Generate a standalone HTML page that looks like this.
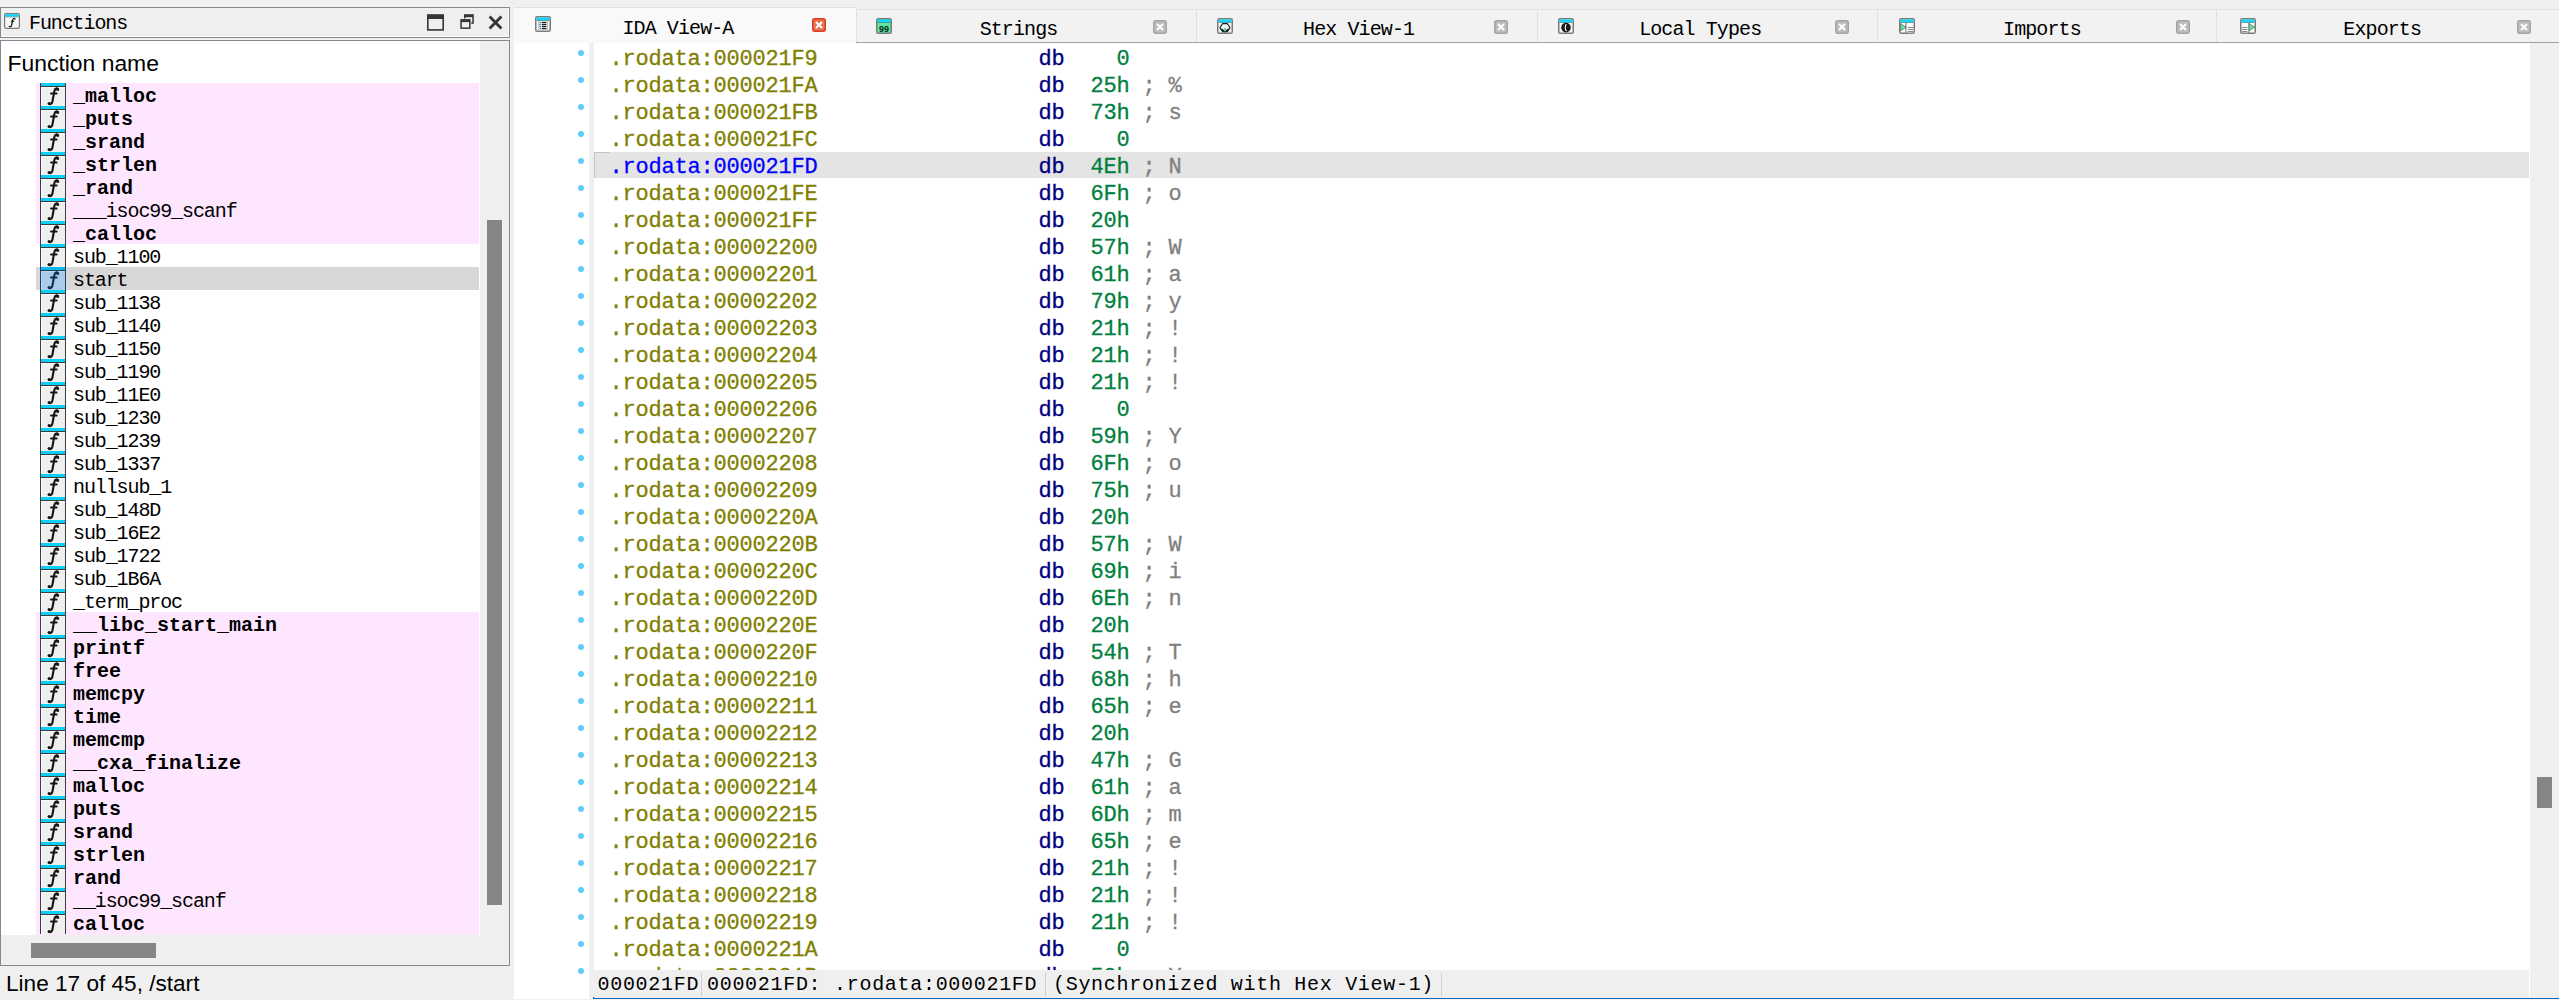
<!DOCTYPE html><html><head><meta charset="utf-8"><style>
*{margin:0;padding:0;box-sizing:border-box}
html,body{width:2559px;height:1000px;overflow:hidden;background:#f0f0f0;position:relative;font-family:"Liberation Mono",monospace}
.abs{position:absolute}
.mono{font-family:"Liberation Mono",monospace;white-space:pre}
.sans{font-family:"Liberation Sans",sans-serif;white-space:pre}
#ftitle{left:0;top:7;width:510px;height:31px;border:1px solid #848892;background:#efefef}
#flist{left:0;top:40px;width:510px;height:926px;border:1px solid #848892;background:#fff}
.frow{position:absolute;left:36px;width:443px;height:23px}
.frow .ic{position:absolute;left:4px;top:0;width:26px;height:23px}
.frow .tx{position:absolute;left:37px;top:2px;height:23px;line-height:23px;font-size:20px;letter-spacing:-1.1px;color:#000;white-space:pre}
.frow .tx.b{font-weight:bold;letter-spacing:0}
.tab{position:absolute;height:34px}
.tabtx{position:absolute;font-size:20px;letter-spacing:-1.1px;color:#000;white-space:pre;line-height:20px}
.code{position:absolute;left:608.6px;font-size:22px;letter-spacing:-0.2px;white-space:pre;line-height:27px;height:27px;-webkit-text-stroke:0.3px currentColor}
.olive{color:#808000}.navy{color:#000080}.grn{color:#008040}.gray{color:#808080}.blue{color:#0000ff}
.dot{position:absolute;left:578px;width:6px;height:6px;border-radius:3px;background:#5fcdfc}
</style></head><body>
<div class="abs" style="left:0;top:7px;width:510px;height:31px;border:1px solid #848892;background:#efefef"></div><div class="abs" style="left:1px;top:36px;width:508px;height:1px;background:#fff"></div><div class="abs" style="left:508px;top:8px;width:1px;height:29px;background:#fff"></div>
<svg class="abs" style="left:4px;top:13px" width="16" height="16" viewBox="0 0 16 16"><rect x="0.6" y="0.6" width="14.8" height="14.8" rx="1.6" fill="#f8f8f8" stroke="#7a7a7a" stroke-width="1.2"/><rect x="1.2" y="1.2" width="13.6" height="2.4" fill="#0ad8fc"/><rect x="1.2" y="3.6" width="13.6" height="0.7" fill="#4a8a9a"/><path d="M11 6.2 C10.6 5 9 5.2 8.6 7.2 L7.6 12.4 C7.3 13.6 6.3 13.9 5.3 13.5" fill="none" stroke="#1a1a1a" stroke-width="1.3" stroke-linecap="round"/><path d="M6.9 8.3 L10.2 8.3" stroke="#1a1a1a" stroke-width="1.1"/></svg>
<div class="abs mono" style="left:29px;top:14px;font-size:20px;letter-spacing:-1.1px;line-height:20px;color:#000">Functions</div>
<svg class="abs" style="left:420px;top:8px" width="90" height="30" viewBox="0 0 90 30"><rect x="7" y="6.2" width="17" height="16.5" fill="#333538"/><rect x="8.6" y="11" width="13.8" height="10.1" fill="#efefef"/><rect x="44" y="6.2" width="9.8" height="9.6" fill="#333538"/><rect x="45.5" y="9.2" width="6.8" height="5.1" fill="#efefef"/><rect x="39.6" y="10.4" width="11.7" height="11.2" fill="#efefef"/><rect x="40.3" y="11.1" width="10.3" height="9.8" fill="#333538"/><rect x="41.8" y="14.1" width="7.3" height="5.3" fill="#efefef"/><path d="M69.6 8.6 L81.4 20.4 M81.4 8.6 L69.6 20.4" stroke="#333538" stroke-width="2.8"/></svg>
<div class="abs" style="left:0;top:40px;width:510px;height:926px;border:1px solid #848892;background:#fff"></div>
<div class="abs sans" style="left:7.5px;top:50px;font-size:22.9px;line-height:26px;color:#000">Function name</div>
<div class="frow" style="top:83px;height:23px;background:#fee6fe;overflow:hidden">
<div class="ic"><svg width="26" height="23" viewBox="0 0 26 23"><rect x="0" y="0" width="26" height="23" fill="#3c3c3c"/><rect x="1" y="0" width="24" height="3" fill="#0ad0f8"/><rect x="1" y="4" width="24" height="19" fill="#fafafa"/><rect x="2" y="5" width="23" height="18" fill="#efefef"/><path d="M18.2 6.6 C17.8 4.6 15 4.8 14.3 8.2 L12.4 18.8 C12 21 10.4 21.6 8.6 20.6" fill="none" stroke="#161616" stroke-width="2.1" stroke-linecap="round"/><circle cx="17.4" cy="6.3" r="1.5" fill="#161616"/><circle cx="9.4" cy="20.4" r="1.5" fill="#161616"/><path d="M11 10.6 L16.6 10.6" stroke="#161616" stroke-width="2" stroke-linecap="round"/></svg></div>
<div class="tx b">_malloc</div></div>
<div class="frow" style="top:106px;height:23px;background:#fee6fe;overflow:hidden">
<div class="ic"><svg width="26" height="23" viewBox="0 0 26 23"><rect x="0" y="0" width="26" height="23" fill="#3c3c3c"/><rect x="1" y="0" width="24" height="3" fill="#0ad0f8"/><rect x="1" y="4" width="24" height="19" fill="#fafafa"/><rect x="2" y="5" width="23" height="18" fill="#efefef"/><path d="M18.2 6.6 C17.8 4.6 15 4.8 14.3 8.2 L12.4 18.8 C12 21 10.4 21.6 8.6 20.6" fill="none" stroke="#161616" stroke-width="2.1" stroke-linecap="round"/><circle cx="17.4" cy="6.3" r="1.5" fill="#161616"/><circle cx="9.4" cy="20.4" r="1.5" fill="#161616"/><path d="M11 10.6 L16.6 10.6" stroke="#161616" stroke-width="2" stroke-linecap="round"/></svg></div>
<div class="tx b">_puts</div></div>
<div class="frow" style="top:129px;height:23px;background:#fee6fe;overflow:hidden">
<div class="ic"><svg width="26" height="23" viewBox="0 0 26 23"><rect x="0" y="0" width="26" height="23" fill="#3c3c3c"/><rect x="1" y="0" width="24" height="3" fill="#0ad0f8"/><rect x="1" y="4" width="24" height="19" fill="#fafafa"/><rect x="2" y="5" width="23" height="18" fill="#efefef"/><path d="M18.2 6.6 C17.8 4.6 15 4.8 14.3 8.2 L12.4 18.8 C12 21 10.4 21.6 8.6 20.6" fill="none" stroke="#161616" stroke-width="2.1" stroke-linecap="round"/><circle cx="17.4" cy="6.3" r="1.5" fill="#161616"/><circle cx="9.4" cy="20.4" r="1.5" fill="#161616"/><path d="M11 10.6 L16.6 10.6" stroke="#161616" stroke-width="2" stroke-linecap="round"/></svg></div>
<div class="tx b">_srand</div></div>
<div class="frow" style="top:152px;height:23px;background:#fee6fe;overflow:hidden">
<div class="ic"><svg width="26" height="23" viewBox="0 0 26 23"><rect x="0" y="0" width="26" height="23" fill="#3c3c3c"/><rect x="1" y="0" width="24" height="3" fill="#0ad0f8"/><rect x="1" y="4" width="24" height="19" fill="#fafafa"/><rect x="2" y="5" width="23" height="18" fill="#efefef"/><path d="M18.2 6.6 C17.8 4.6 15 4.8 14.3 8.2 L12.4 18.8 C12 21 10.4 21.6 8.6 20.6" fill="none" stroke="#161616" stroke-width="2.1" stroke-linecap="round"/><circle cx="17.4" cy="6.3" r="1.5" fill="#161616"/><circle cx="9.4" cy="20.4" r="1.5" fill="#161616"/><path d="M11 10.6 L16.6 10.6" stroke="#161616" stroke-width="2" stroke-linecap="round"/></svg></div>
<div class="tx b">_strlen</div></div>
<div class="frow" style="top:175px;height:23px;background:#fee6fe;overflow:hidden">
<div class="ic"><svg width="26" height="23" viewBox="0 0 26 23"><rect x="0" y="0" width="26" height="23" fill="#3c3c3c"/><rect x="1" y="0" width="24" height="3" fill="#0ad0f8"/><rect x="1" y="4" width="24" height="19" fill="#fafafa"/><rect x="2" y="5" width="23" height="18" fill="#efefef"/><path d="M18.2 6.6 C17.8 4.6 15 4.8 14.3 8.2 L12.4 18.8 C12 21 10.4 21.6 8.6 20.6" fill="none" stroke="#161616" stroke-width="2.1" stroke-linecap="round"/><circle cx="17.4" cy="6.3" r="1.5" fill="#161616"/><circle cx="9.4" cy="20.4" r="1.5" fill="#161616"/><path d="M11 10.6 L16.6 10.6" stroke="#161616" stroke-width="2" stroke-linecap="round"/></svg></div>
<div class="tx b">_rand</div></div>
<div class="frow" style="top:198px;height:23px;background:#fee6fe;overflow:hidden">
<div class="ic"><svg width="26" height="23" viewBox="0 0 26 23"><rect x="0" y="0" width="26" height="23" fill="#3c3c3c"/><rect x="1" y="0" width="24" height="3" fill="#0ad0f8"/><rect x="1" y="4" width="24" height="19" fill="#fafafa"/><rect x="2" y="5" width="23" height="18" fill="#efefef"/><path d="M18.2 6.6 C17.8 4.6 15 4.8 14.3 8.2 L12.4 18.8 C12 21 10.4 21.6 8.6 20.6" fill="none" stroke="#161616" stroke-width="2.1" stroke-linecap="round"/><circle cx="17.4" cy="6.3" r="1.5" fill="#161616"/><circle cx="9.4" cy="20.4" r="1.5" fill="#161616"/><path d="M11 10.6 L16.6 10.6" stroke="#161616" stroke-width="2" stroke-linecap="round"/></svg></div>
<div class="tx">___isoc99_scanf</div></div>
<div class="frow" style="top:221px;height:23px;background:#fee6fe;overflow:hidden">
<div class="ic"><svg width="26" height="23" viewBox="0 0 26 23"><rect x="0" y="0" width="26" height="23" fill="#3c3c3c"/><rect x="1" y="0" width="24" height="3" fill="#0ad0f8"/><rect x="1" y="4" width="24" height="19" fill="#fafafa"/><rect x="2" y="5" width="23" height="18" fill="#efefef"/><path d="M18.2 6.6 C17.8 4.6 15 4.8 14.3 8.2 L12.4 18.8 C12 21 10.4 21.6 8.6 20.6" fill="none" stroke="#161616" stroke-width="2.1" stroke-linecap="round"/><circle cx="17.4" cy="6.3" r="1.5" fill="#161616"/><circle cx="9.4" cy="20.4" r="1.5" fill="#161616"/><path d="M11 10.6 L16.6 10.6" stroke="#161616" stroke-width="2" stroke-linecap="round"/></svg></div>
<div class="tx b">_calloc</div></div>
<div class="frow" style="top:244px;height:23px;background:transparent;overflow:hidden">
<div class="ic"><svg width="26" height="23" viewBox="0 0 26 23"><rect x="0" y="0" width="26" height="23" fill="#3c3c3c"/><rect x="1" y="0" width="24" height="3" fill="#0ad0f8"/><rect x="1" y="4" width="24" height="19" fill="#fafafa"/><rect x="2" y="5" width="23" height="18" fill="#efefef"/><path d="M18.2 6.6 C17.8 4.6 15 4.8 14.3 8.2 L12.4 18.8 C12 21 10.4 21.6 8.6 20.6" fill="none" stroke="#161616" stroke-width="2.1" stroke-linecap="round"/><circle cx="17.4" cy="6.3" r="1.5" fill="#161616"/><circle cx="9.4" cy="20.4" r="1.5" fill="#161616"/><path d="M11 10.6 L16.6 10.6" stroke="#161616" stroke-width="2" stroke-linecap="round"/></svg></div>
<div class="tx">sub_1100</div></div>
<div class="frow" style="top:267px;height:23px;background:#d8d8d8;overflow:hidden">
<div class="ic"><svg width="26" height="23" viewBox="0 0 26 23"><rect x="0" y="0" width="26" height="23" fill="#23405c"/><rect x="1" y="0" width="24" height="3" fill="#08b8f0"/><rect x="1" y="4" width="24" height="19" fill="#b8d8f0"/><rect x="2" y="5" width="23" height="18" fill="#aacce8"/><path d="M18.2 6.6 C17.8 4.6 15 4.8 14.3 8.2 L12.4 18.8 C12 21 10.4 21.6 8.6 20.6" fill="none" stroke="#0f3050" stroke-width="2.1" stroke-linecap="round"/><circle cx="17.4" cy="6.3" r="1.5" fill="#0f3050"/><circle cx="9.4" cy="20.4" r="1.5" fill="#0f3050"/><path d="M11 10.6 L16.6 10.6" stroke="#0f3050" stroke-width="2" stroke-linecap="round"/></svg></div>
<div class="tx">start</div></div>
<div class="frow" style="top:290px;height:23px;background:transparent;overflow:hidden">
<div class="ic"><svg width="26" height="23" viewBox="0 0 26 23"><rect x="0" y="0" width="26" height="23" fill="#3c3c3c"/><rect x="1" y="0" width="24" height="3" fill="#0ad0f8"/><rect x="1" y="4" width="24" height="19" fill="#fafafa"/><rect x="2" y="5" width="23" height="18" fill="#efefef"/><path d="M18.2 6.6 C17.8 4.6 15 4.8 14.3 8.2 L12.4 18.8 C12 21 10.4 21.6 8.6 20.6" fill="none" stroke="#161616" stroke-width="2.1" stroke-linecap="round"/><circle cx="17.4" cy="6.3" r="1.5" fill="#161616"/><circle cx="9.4" cy="20.4" r="1.5" fill="#161616"/><path d="M11 10.6 L16.6 10.6" stroke="#161616" stroke-width="2" stroke-linecap="round"/></svg></div>
<div class="tx">sub_1138</div></div>
<div class="frow" style="top:313px;height:23px;background:transparent;overflow:hidden">
<div class="ic"><svg width="26" height="23" viewBox="0 0 26 23"><rect x="0" y="0" width="26" height="23" fill="#3c3c3c"/><rect x="1" y="0" width="24" height="3" fill="#0ad0f8"/><rect x="1" y="4" width="24" height="19" fill="#fafafa"/><rect x="2" y="5" width="23" height="18" fill="#efefef"/><path d="M18.2 6.6 C17.8 4.6 15 4.8 14.3 8.2 L12.4 18.8 C12 21 10.4 21.6 8.6 20.6" fill="none" stroke="#161616" stroke-width="2.1" stroke-linecap="round"/><circle cx="17.4" cy="6.3" r="1.5" fill="#161616"/><circle cx="9.4" cy="20.4" r="1.5" fill="#161616"/><path d="M11 10.6 L16.6 10.6" stroke="#161616" stroke-width="2" stroke-linecap="round"/></svg></div>
<div class="tx">sub_1140</div></div>
<div class="frow" style="top:336px;height:23px;background:transparent;overflow:hidden">
<div class="ic"><svg width="26" height="23" viewBox="0 0 26 23"><rect x="0" y="0" width="26" height="23" fill="#3c3c3c"/><rect x="1" y="0" width="24" height="3" fill="#0ad0f8"/><rect x="1" y="4" width="24" height="19" fill="#fafafa"/><rect x="2" y="5" width="23" height="18" fill="#efefef"/><path d="M18.2 6.6 C17.8 4.6 15 4.8 14.3 8.2 L12.4 18.8 C12 21 10.4 21.6 8.6 20.6" fill="none" stroke="#161616" stroke-width="2.1" stroke-linecap="round"/><circle cx="17.4" cy="6.3" r="1.5" fill="#161616"/><circle cx="9.4" cy="20.4" r="1.5" fill="#161616"/><path d="M11 10.6 L16.6 10.6" stroke="#161616" stroke-width="2" stroke-linecap="round"/></svg></div>
<div class="tx">sub_1150</div></div>
<div class="frow" style="top:359px;height:23px;background:transparent;overflow:hidden">
<div class="ic"><svg width="26" height="23" viewBox="0 0 26 23"><rect x="0" y="0" width="26" height="23" fill="#3c3c3c"/><rect x="1" y="0" width="24" height="3" fill="#0ad0f8"/><rect x="1" y="4" width="24" height="19" fill="#fafafa"/><rect x="2" y="5" width="23" height="18" fill="#efefef"/><path d="M18.2 6.6 C17.8 4.6 15 4.8 14.3 8.2 L12.4 18.8 C12 21 10.4 21.6 8.6 20.6" fill="none" stroke="#161616" stroke-width="2.1" stroke-linecap="round"/><circle cx="17.4" cy="6.3" r="1.5" fill="#161616"/><circle cx="9.4" cy="20.4" r="1.5" fill="#161616"/><path d="M11 10.6 L16.6 10.6" stroke="#161616" stroke-width="2" stroke-linecap="round"/></svg></div>
<div class="tx">sub_1190</div></div>
<div class="frow" style="top:382px;height:23px;background:transparent;overflow:hidden">
<div class="ic"><svg width="26" height="23" viewBox="0 0 26 23"><rect x="0" y="0" width="26" height="23" fill="#3c3c3c"/><rect x="1" y="0" width="24" height="3" fill="#0ad0f8"/><rect x="1" y="4" width="24" height="19" fill="#fafafa"/><rect x="2" y="5" width="23" height="18" fill="#efefef"/><path d="M18.2 6.6 C17.8 4.6 15 4.8 14.3 8.2 L12.4 18.8 C12 21 10.4 21.6 8.6 20.6" fill="none" stroke="#161616" stroke-width="2.1" stroke-linecap="round"/><circle cx="17.4" cy="6.3" r="1.5" fill="#161616"/><circle cx="9.4" cy="20.4" r="1.5" fill="#161616"/><path d="M11 10.6 L16.6 10.6" stroke="#161616" stroke-width="2" stroke-linecap="round"/></svg></div>
<div class="tx">sub_11E0</div></div>
<div class="frow" style="top:405px;height:23px;background:transparent;overflow:hidden">
<div class="ic"><svg width="26" height="23" viewBox="0 0 26 23"><rect x="0" y="0" width="26" height="23" fill="#3c3c3c"/><rect x="1" y="0" width="24" height="3" fill="#0ad0f8"/><rect x="1" y="4" width="24" height="19" fill="#fafafa"/><rect x="2" y="5" width="23" height="18" fill="#efefef"/><path d="M18.2 6.6 C17.8 4.6 15 4.8 14.3 8.2 L12.4 18.8 C12 21 10.4 21.6 8.6 20.6" fill="none" stroke="#161616" stroke-width="2.1" stroke-linecap="round"/><circle cx="17.4" cy="6.3" r="1.5" fill="#161616"/><circle cx="9.4" cy="20.4" r="1.5" fill="#161616"/><path d="M11 10.6 L16.6 10.6" stroke="#161616" stroke-width="2" stroke-linecap="round"/></svg></div>
<div class="tx">sub_1230</div></div>
<div class="frow" style="top:428px;height:23px;background:transparent;overflow:hidden">
<div class="ic"><svg width="26" height="23" viewBox="0 0 26 23"><rect x="0" y="0" width="26" height="23" fill="#3c3c3c"/><rect x="1" y="0" width="24" height="3" fill="#0ad0f8"/><rect x="1" y="4" width="24" height="19" fill="#fafafa"/><rect x="2" y="5" width="23" height="18" fill="#efefef"/><path d="M18.2 6.6 C17.8 4.6 15 4.8 14.3 8.2 L12.4 18.8 C12 21 10.4 21.6 8.6 20.6" fill="none" stroke="#161616" stroke-width="2.1" stroke-linecap="round"/><circle cx="17.4" cy="6.3" r="1.5" fill="#161616"/><circle cx="9.4" cy="20.4" r="1.5" fill="#161616"/><path d="M11 10.6 L16.6 10.6" stroke="#161616" stroke-width="2" stroke-linecap="round"/></svg></div>
<div class="tx">sub_1239</div></div>
<div class="frow" style="top:451px;height:23px;background:transparent;overflow:hidden">
<div class="ic"><svg width="26" height="23" viewBox="0 0 26 23"><rect x="0" y="0" width="26" height="23" fill="#3c3c3c"/><rect x="1" y="0" width="24" height="3" fill="#0ad0f8"/><rect x="1" y="4" width="24" height="19" fill="#fafafa"/><rect x="2" y="5" width="23" height="18" fill="#efefef"/><path d="M18.2 6.6 C17.8 4.6 15 4.8 14.3 8.2 L12.4 18.8 C12 21 10.4 21.6 8.6 20.6" fill="none" stroke="#161616" stroke-width="2.1" stroke-linecap="round"/><circle cx="17.4" cy="6.3" r="1.5" fill="#161616"/><circle cx="9.4" cy="20.4" r="1.5" fill="#161616"/><path d="M11 10.6 L16.6 10.6" stroke="#161616" stroke-width="2" stroke-linecap="round"/></svg></div>
<div class="tx">sub_1337</div></div>
<div class="frow" style="top:474px;height:23px;background:transparent;overflow:hidden">
<div class="ic"><svg width="26" height="23" viewBox="0 0 26 23"><rect x="0" y="0" width="26" height="23" fill="#3c3c3c"/><rect x="1" y="0" width="24" height="3" fill="#0ad0f8"/><rect x="1" y="4" width="24" height="19" fill="#fafafa"/><rect x="2" y="5" width="23" height="18" fill="#efefef"/><path d="M18.2 6.6 C17.8 4.6 15 4.8 14.3 8.2 L12.4 18.8 C12 21 10.4 21.6 8.6 20.6" fill="none" stroke="#161616" stroke-width="2.1" stroke-linecap="round"/><circle cx="17.4" cy="6.3" r="1.5" fill="#161616"/><circle cx="9.4" cy="20.4" r="1.5" fill="#161616"/><path d="M11 10.6 L16.6 10.6" stroke="#161616" stroke-width="2" stroke-linecap="round"/></svg></div>
<div class="tx">nullsub_1</div></div>
<div class="frow" style="top:497px;height:23px;background:transparent;overflow:hidden">
<div class="ic"><svg width="26" height="23" viewBox="0 0 26 23"><rect x="0" y="0" width="26" height="23" fill="#3c3c3c"/><rect x="1" y="0" width="24" height="3" fill="#0ad0f8"/><rect x="1" y="4" width="24" height="19" fill="#fafafa"/><rect x="2" y="5" width="23" height="18" fill="#efefef"/><path d="M18.2 6.6 C17.8 4.6 15 4.8 14.3 8.2 L12.4 18.8 C12 21 10.4 21.6 8.6 20.6" fill="none" stroke="#161616" stroke-width="2.1" stroke-linecap="round"/><circle cx="17.4" cy="6.3" r="1.5" fill="#161616"/><circle cx="9.4" cy="20.4" r="1.5" fill="#161616"/><path d="M11 10.6 L16.6 10.6" stroke="#161616" stroke-width="2" stroke-linecap="round"/></svg></div>
<div class="tx">sub_148D</div></div>
<div class="frow" style="top:520px;height:23px;background:transparent;overflow:hidden">
<div class="ic"><svg width="26" height="23" viewBox="0 0 26 23"><rect x="0" y="0" width="26" height="23" fill="#3c3c3c"/><rect x="1" y="0" width="24" height="3" fill="#0ad0f8"/><rect x="1" y="4" width="24" height="19" fill="#fafafa"/><rect x="2" y="5" width="23" height="18" fill="#efefef"/><path d="M18.2 6.6 C17.8 4.6 15 4.8 14.3 8.2 L12.4 18.8 C12 21 10.4 21.6 8.6 20.6" fill="none" stroke="#161616" stroke-width="2.1" stroke-linecap="round"/><circle cx="17.4" cy="6.3" r="1.5" fill="#161616"/><circle cx="9.4" cy="20.4" r="1.5" fill="#161616"/><path d="M11 10.6 L16.6 10.6" stroke="#161616" stroke-width="2" stroke-linecap="round"/></svg></div>
<div class="tx">sub_16E2</div></div>
<div class="frow" style="top:543px;height:23px;background:transparent;overflow:hidden">
<div class="ic"><svg width="26" height="23" viewBox="0 0 26 23"><rect x="0" y="0" width="26" height="23" fill="#3c3c3c"/><rect x="1" y="0" width="24" height="3" fill="#0ad0f8"/><rect x="1" y="4" width="24" height="19" fill="#fafafa"/><rect x="2" y="5" width="23" height="18" fill="#efefef"/><path d="M18.2 6.6 C17.8 4.6 15 4.8 14.3 8.2 L12.4 18.8 C12 21 10.4 21.6 8.6 20.6" fill="none" stroke="#161616" stroke-width="2.1" stroke-linecap="round"/><circle cx="17.4" cy="6.3" r="1.5" fill="#161616"/><circle cx="9.4" cy="20.4" r="1.5" fill="#161616"/><path d="M11 10.6 L16.6 10.6" stroke="#161616" stroke-width="2" stroke-linecap="round"/></svg></div>
<div class="tx">sub_1722</div></div>
<div class="frow" style="top:566px;height:23px;background:transparent;overflow:hidden">
<div class="ic"><svg width="26" height="23" viewBox="0 0 26 23"><rect x="0" y="0" width="26" height="23" fill="#3c3c3c"/><rect x="1" y="0" width="24" height="3" fill="#0ad0f8"/><rect x="1" y="4" width="24" height="19" fill="#fafafa"/><rect x="2" y="5" width="23" height="18" fill="#efefef"/><path d="M18.2 6.6 C17.8 4.6 15 4.8 14.3 8.2 L12.4 18.8 C12 21 10.4 21.6 8.6 20.6" fill="none" stroke="#161616" stroke-width="2.1" stroke-linecap="round"/><circle cx="17.4" cy="6.3" r="1.5" fill="#161616"/><circle cx="9.4" cy="20.4" r="1.5" fill="#161616"/><path d="M11 10.6 L16.6 10.6" stroke="#161616" stroke-width="2" stroke-linecap="round"/></svg></div>
<div class="tx">sub_1B6A</div></div>
<div class="frow" style="top:589px;height:23px;background:transparent;overflow:hidden">
<div class="ic"><svg width="26" height="23" viewBox="0 0 26 23"><rect x="0" y="0" width="26" height="23" fill="#3c3c3c"/><rect x="1" y="0" width="24" height="3" fill="#0ad0f8"/><rect x="1" y="4" width="24" height="19" fill="#fafafa"/><rect x="2" y="5" width="23" height="18" fill="#efefef"/><path d="M18.2 6.6 C17.8 4.6 15 4.8 14.3 8.2 L12.4 18.8 C12 21 10.4 21.6 8.6 20.6" fill="none" stroke="#161616" stroke-width="2.1" stroke-linecap="round"/><circle cx="17.4" cy="6.3" r="1.5" fill="#161616"/><circle cx="9.4" cy="20.4" r="1.5" fill="#161616"/><path d="M11 10.6 L16.6 10.6" stroke="#161616" stroke-width="2" stroke-linecap="round"/></svg></div>
<div class="tx">_term_proc</div></div>
<div class="frow" style="top:612px;height:23px;background:#fee6fe;overflow:hidden">
<div class="ic"><svg width="26" height="23" viewBox="0 0 26 23"><rect x="0" y="0" width="26" height="23" fill="#3c3c3c"/><rect x="1" y="0" width="24" height="3" fill="#0ad0f8"/><rect x="1" y="4" width="24" height="19" fill="#fafafa"/><rect x="2" y="5" width="23" height="18" fill="#efefef"/><path d="M18.2 6.6 C17.8 4.6 15 4.8 14.3 8.2 L12.4 18.8 C12 21 10.4 21.6 8.6 20.6" fill="none" stroke="#161616" stroke-width="2.1" stroke-linecap="round"/><circle cx="17.4" cy="6.3" r="1.5" fill="#161616"/><circle cx="9.4" cy="20.4" r="1.5" fill="#161616"/><path d="M11 10.6 L16.6 10.6" stroke="#161616" stroke-width="2" stroke-linecap="round"/></svg></div>
<div class="tx b">__libc_start_main</div></div>
<div class="frow" style="top:635px;height:23px;background:#fee6fe;overflow:hidden">
<div class="ic"><svg width="26" height="23" viewBox="0 0 26 23"><rect x="0" y="0" width="26" height="23" fill="#3c3c3c"/><rect x="1" y="0" width="24" height="3" fill="#0ad0f8"/><rect x="1" y="4" width="24" height="19" fill="#fafafa"/><rect x="2" y="5" width="23" height="18" fill="#efefef"/><path d="M18.2 6.6 C17.8 4.6 15 4.8 14.3 8.2 L12.4 18.8 C12 21 10.4 21.6 8.6 20.6" fill="none" stroke="#161616" stroke-width="2.1" stroke-linecap="round"/><circle cx="17.4" cy="6.3" r="1.5" fill="#161616"/><circle cx="9.4" cy="20.4" r="1.5" fill="#161616"/><path d="M11 10.6 L16.6 10.6" stroke="#161616" stroke-width="2" stroke-linecap="round"/></svg></div>
<div class="tx b">printf</div></div>
<div class="frow" style="top:658px;height:23px;background:#fee6fe;overflow:hidden">
<div class="ic"><svg width="26" height="23" viewBox="0 0 26 23"><rect x="0" y="0" width="26" height="23" fill="#3c3c3c"/><rect x="1" y="0" width="24" height="3" fill="#0ad0f8"/><rect x="1" y="4" width="24" height="19" fill="#fafafa"/><rect x="2" y="5" width="23" height="18" fill="#efefef"/><path d="M18.2 6.6 C17.8 4.6 15 4.8 14.3 8.2 L12.4 18.8 C12 21 10.4 21.6 8.6 20.6" fill="none" stroke="#161616" stroke-width="2.1" stroke-linecap="round"/><circle cx="17.4" cy="6.3" r="1.5" fill="#161616"/><circle cx="9.4" cy="20.4" r="1.5" fill="#161616"/><path d="M11 10.6 L16.6 10.6" stroke="#161616" stroke-width="2" stroke-linecap="round"/></svg></div>
<div class="tx b">free</div></div>
<div class="frow" style="top:681px;height:23px;background:#fee6fe;overflow:hidden">
<div class="ic"><svg width="26" height="23" viewBox="0 0 26 23"><rect x="0" y="0" width="26" height="23" fill="#3c3c3c"/><rect x="1" y="0" width="24" height="3" fill="#0ad0f8"/><rect x="1" y="4" width="24" height="19" fill="#fafafa"/><rect x="2" y="5" width="23" height="18" fill="#efefef"/><path d="M18.2 6.6 C17.8 4.6 15 4.8 14.3 8.2 L12.4 18.8 C12 21 10.4 21.6 8.6 20.6" fill="none" stroke="#161616" stroke-width="2.1" stroke-linecap="round"/><circle cx="17.4" cy="6.3" r="1.5" fill="#161616"/><circle cx="9.4" cy="20.4" r="1.5" fill="#161616"/><path d="M11 10.6 L16.6 10.6" stroke="#161616" stroke-width="2" stroke-linecap="round"/></svg></div>
<div class="tx b">memcpy</div></div>
<div class="frow" style="top:704px;height:23px;background:#fee6fe;overflow:hidden">
<div class="ic"><svg width="26" height="23" viewBox="0 0 26 23"><rect x="0" y="0" width="26" height="23" fill="#3c3c3c"/><rect x="1" y="0" width="24" height="3" fill="#0ad0f8"/><rect x="1" y="4" width="24" height="19" fill="#fafafa"/><rect x="2" y="5" width="23" height="18" fill="#efefef"/><path d="M18.2 6.6 C17.8 4.6 15 4.8 14.3 8.2 L12.4 18.8 C12 21 10.4 21.6 8.6 20.6" fill="none" stroke="#161616" stroke-width="2.1" stroke-linecap="round"/><circle cx="17.4" cy="6.3" r="1.5" fill="#161616"/><circle cx="9.4" cy="20.4" r="1.5" fill="#161616"/><path d="M11 10.6 L16.6 10.6" stroke="#161616" stroke-width="2" stroke-linecap="round"/></svg></div>
<div class="tx b">time</div></div>
<div class="frow" style="top:727px;height:23px;background:#fee6fe;overflow:hidden">
<div class="ic"><svg width="26" height="23" viewBox="0 0 26 23"><rect x="0" y="0" width="26" height="23" fill="#3c3c3c"/><rect x="1" y="0" width="24" height="3" fill="#0ad0f8"/><rect x="1" y="4" width="24" height="19" fill="#fafafa"/><rect x="2" y="5" width="23" height="18" fill="#efefef"/><path d="M18.2 6.6 C17.8 4.6 15 4.8 14.3 8.2 L12.4 18.8 C12 21 10.4 21.6 8.6 20.6" fill="none" stroke="#161616" stroke-width="2.1" stroke-linecap="round"/><circle cx="17.4" cy="6.3" r="1.5" fill="#161616"/><circle cx="9.4" cy="20.4" r="1.5" fill="#161616"/><path d="M11 10.6 L16.6 10.6" stroke="#161616" stroke-width="2" stroke-linecap="round"/></svg></div>
<div class="tx b">memcmp</div></div>
<div class="frow" style="top:750px;height:23px;background:#fee6fe;overflow:hidden">
<div class="ic"><svg width="26" height="23" viewBox="0 0 26 23"><rect x="0" y="0" width="26" height="23" fill="#3c3c3c"/><rect x="1" y="0" width="24" height="3" fill="#0ad0f8"/><rect x="1" y="4" width="24" height="19" fill="#fafafa"/><rect x="2" y="5" width="23" height="18" fill="#efefef"/><path d="M18.2 6.6 C17.8 4.6 15 4.8 14.3 8.2 L12.4 18.8 C12 21 10.4 21.6 8.6 20.6" fill="none" stroke="#161616" stroke-width="2.1" stroke-linecap="round"/><circle cx="17.4" cy="6.3" r="1.5" fill="#161616"/><circle cx="9.4" cy="20.4" r="1.5" fill="#161616"/><path d="M11 10.6 L16.6 10.6" stroke="#161616" stroke-width="2" stroke-linecap="round"/></svg></div>
<div class="tx b">__cxa_finalize</div></div>
<div class="frow" style="top:773px;height:23px;background:#fee6fe;overflow:hidden">
<div class="ic"><svg width="26" height="23" viewBox="0 0 26 23"><rect x="0" y="0" width="26" height="23" fill="#3c3c3c"/><rect x="1" y="0" width="24" height="3" fill="#0ad0f8"/><rect x="1" y="4" width="24" height="19" fill="#fafafa"/><rect x="2" y="5" width="23" height="18" fill="#efefef"/><path d="M18.2 6.6 C17.8 4.6 15 4.8 14.3 8.2 L12.4 18.8 C12 21 10.4 21.6 8.6 20.6" fill="none" stroke="#161616" stroke-width="2.1" stroke-linecap="round"/><circle cx="17.4" cy="6.3" r="1.5" fill="#161616"/><circle cx="9.4" cy="20.4" r="1.5" fill="#161616"/><path d="M11 10.6 L16.6 10.6" stroke="#161616" stroke-width="2" stroke-linecap="round"/></svg></div>
<div class="tx b">malloc</div></div>
<div class="frow" style="top:796px;height:23px;background:#fee6fe;overflow:hidden">
<div class="ic"><svg width="26" height="23" viewBox="0 0 26 23"><rect x="0" y="0" width="26" height="23" fill="#3c3c3c"/><rect x="1" y="0" width="24" height="3" fill="#0ad0f8"/><rect x="1" y="4" width="24" height="19" fill="#fafafa"/><rect x="2" y="5" width="23" height="18" fill="#efefef"/><path d="M18.2 6.6 C17.8 4.6 15 4.8 14.3 8.2 L12.4 18.8 C12 21 10.4 21.6 8.6 20.6" fill="none" stroke="#161616" stroke-width="2.1" stroke-linecap="round"/><circle cx="17.4" cy="6.3" r="1.5" fill="#161616"/><circle cx="9.4" cy="20.4" r="1.5" fill="#161616"/><path d="M11 10.6 L16.6 10.6" stroke="#161616" stroke-width="2" stroke-linecap="round"/></svg></div>
<div class="tx b">puts</div></div>
<div class="frow" style="top:819px;height:23px;background:#fee6fe;overflow:hidden">
<div class="ic"><svg width="26" height="23" viewBox="0 0 26 23"><rect x="0" y="0" width="26" height="23" fill="#3c3c3c"/><rect x="1" y="0" width="24" height="3" fill="#0ad0f8"/><rect x="1" y="4" width="24" height="19" fill="#fafafa"/><rect x="2" y="5" width="23" height="18" fill="#efefef"/><path d="M18.2 6.6 C17.8 4.6 15 4.8 14.3 8.2 L12.4 18.8 C12 21 10.4 21.6 8.6 20.6" fill="none" stroke="#161616" stroke-width="2.1" stroke-linecap="round"/><circle cx="17.4" cy="6.3" r="1.5" fill="#161616"/><circle cx="9.4" cy="20.4" r="1.5" fill="#161616"/><path d="M11 10.6 L16.6 10.6" stroke="#161616" stroke-width="2" stroke-linecap="round"/></svg></div>
<div class="tx b">srand</div></div>
<div class="frow" style="top:842px;height:23px;background:#fee6fe;overflow:hidden">
<div class="ic"><svg width="26" height="23" viewBox="0 0 26 23"><rect x="0" y="0" width="26" height="23" fill="#3c3c3c"/><rect x="1" y="0" width="24" height="3" fill="#0ad0f8"/><rect x="1" y="4" width="24" height="19" fill="#fafafa"/><rect x="2" y="5" width="23" height="18" fill="#efefef"/><path d="M18.2 6.6 C17.8 4.6 15 4.8 14.3 8.2 L12.4 18.8 C12 21 10.4 21.6 8.6 20.6" fill="none" stroke="#161616" stroke-width="2.1" stroke-linecap="round"/><circle cx="17.4" cy="6.3" r="1.5" fill="#161616"/><circle cx="9.4" cy="20.4" r="1.5" fill="#161616"/><path d="M11 10.6 L16.6 10.6" stroke="#161616" stroke-width="2" stroke-linecap="round"/></svg></div>
<div class="tx b">strlen</div></div>
<div class="frow" style="top:865px;height:23px;background:#fee6fe;overflow:hidden">
<div class="ic"><svg width="26" height="23" viewBox="0 0 26 23"><rect x="0" y="0" width="26" height="23" fill="#3c3c3c"/><rect x="1" y="0" width="24" height="3" fill="#0ad0f8"/><rect x="1" y="4" width="24" height="19" fill="#fafafa"/><rect x="2" y="5" width="23" height="18" fill="#efefef"/><path d="M18.2 6.6 C17.8 4.6 15 4.8 14.3 8.2 L12.4 18.8 C12 21 10.4 21.6 8.6 20.6" fill="none" stroke="#161616" stroke-width="2.1" stroke-linecap="round"/><circle cx="17.4" cy="6.3" r="1.5" fill="#161616"/><circle cx="9.4" cy="20.4" r="1.5" fill="#161616"/><path d="M11 10.6 L16.6 10.6" stroke="#161616" stroke-width="2" stroke-linecap="round"/></svg></div>
<div class="tx b">rand</div></div>
<div class="frow" style="top:888px;height:23px;background:#fee6fe;overflow:hidden">
<div class="ic"><svg width="26" height="23" viewBox="0 0 26 23"><rect x="0" y="0" width="26" height="23" fill="#3c3c3c"/><rect x="1" y="0" width="24" height="3" fill="#0ad0f8"/><rect x="1" y="4" width="24" height="19" fill="#fafafa"/><rect x="2" y="5" width="23" height="18" fill="#efefef"/><path d="M18.2 6.6 C17.8 4.6 15 4.8 14.3 8.2 L12.4 18.8 C12 21 10.4 21.6 8.6 20.6" fill="none" stroke="#161616" stroke-width="2.1" stroke-linecap="round"/><circle cx="17.4" cy="6.3" r="1.5" fill="#161616"/><circle cx="9.4" cy="20.4" r="1.5" fill="#161616"/><path d="M11 10.6 L16.6 10.6" stroke="#161616" stroke-width="2" stroke-linecap="round"/></svg></div>
<div class="tx">__isoc99_scanf</div></div>
<div class="frow" style="top:911px;height:24px;background:#fee6fe;overflow:hidden">
<div class="ic"><svg width="26" height="23" viewBox="0 0 26 23"><rect x="0" y="0" width="26" height="23" fill="#3c3c3c"/><rect x="1" y="0" width="24" height="3" fill="#0ad0f8"/><rect x="1" y="4" width="24" height="19" fill="#fafafa"/><rect x="2" y="5" width="23" height="18" fill="#efefef"/><path d="M18.2 6.6 C17.8 4.6 15 4.8 14.3 8.2 L12.4 18.8 C12 21 10.4 21.6 8.6 20.6" fill="none" stroke="#161616" stroke-width="2.1" stroke-linecap="round"/><circle cx="17.4" cy="6.3" r="1.5" fill="#161616"/><circle cx="9.4" cy="20.4" r="1.5" fill="#161616"/><path d="M11 10.6 L16.6 10.6" stroke="#161616" stroke-width="2" stroke-linecap="round"/></svg></div>
<div class="tx b">calloc</div></div>
<div class="abs" style="left:480px;top:41px;width:29px;height:894px;background:#efefef"></div>
<div class="abs" style="left:487px;top:220px;width:15px;height:685px;background:#858585"></div>
<div class="abs" style="left:1px;top:935px;width:508px;height:30px;background:#efefef"></div>
<div class="abs" style="left:31px;top:943px;width:125px;height:15px;background:#858585"></div>
<div class="abs sans" style="left:6px;top:971px;font-size:22.6px;line-height:26px;color:#000">Line 17 of 45, /start</div>
<div class="abs" style="left:514px;top:42px;width:2045px;height:1px;background:#a0a0a0"></div>
<div class="abs" style="left:514px;top:7px;width:342px;height:36px;background:#f9f9f9;border-top:1px solid #e0e0e0"></div>
<svg class="abs" style="left:535px;top:16px" width="16" height="16" viewBox="0 0 16 16"><rect x="0.75" y="0.75" width="14.5" height="14.5" rx="1.6" fill="#f6f6f6" stroke="#7a7a7a" stroke-width="1.5"/><rect x="1.5" y="1.5" width="13" height="2.6" fill="#0ad8fc"/><rect x="1.5" y="4.1" width="13" height="0.8" fill="#4a8a9a"/><rect x="3" y="5" width="10" height="9.5" fill="#bdbdbd"/><rect x="3.8" y="5.4" width="8.4" height="8.4" fill="#f0f0f0"/><rect x="4.5" y="6" width="1.6" height="1.2" fill="#2f7fbf"/><rect x="7" y="6" width="4.4" height="1.2" fill="#1a1a1a"/><rect x="4.5" y="8" width="1.6" height="1.2" fill="#2f7fbf"/><rect x="7" y="8" width="4.4" height="1.2" fill="#1a1a1a"/><rect x="4.5" y="10" width="1.6" height="1.2" fill="#2f7fbf"/><rect x="7" y="10" width="4.4" height="1.2" fill="#1a1a1a"/><rect x="4.5" y="12" width="1.6" height="1.2" fill="#2f7fbf"/><rect x="7" y="12" width="4.4" height="1.2" fill="#1a1a1a"/></svg>
<div class="abs mono" style="left:577.95px;top:19.0px;width:200px;text-align:center;font-size:20px;letter-spacing:-0.9px;line-height:20px;color:#000">IDA View-A</div>
<svg class="abs" style="left:812px;top:18px" width="14" height="14" viewBox="0 0 14 14"><rect x="0.75" y="0.75" width="12.5" height="12.5" rx="2" fill="#e4754f" stroke="#e03a2a" stroke-width="1.5"/><path d="M4 4 L10 10 M10 4 L4 10" stroke="#fff" stroke-width="2"/></svg>
<div class="abs" style="left:856px;top:9px;width:340px;height:33px;background:#f2f2f2;border-top:1px solid #e2e2e2"></div>
<div class="abs" style="left:856px;top:10px;width:1px;height:32px;background:#e0e0e0"></div>
<svg class="abs" style="left:876px;top:18px" width="16" height="16" viewBox="0 0 16 16"><rect x="0.75" y="0.75" width="14.5" height="14.5" rx="1.6" fill="#5de8a0" stroke="#7a7a7a" stroke-width="1.5"/><rect x="1.5" y="1.5" width="13" height="2.6" fill="#0ad8fc"/><rect x="1.5" y="4.1" width="13" height="0.8" fill="#4a8a9a"/><text x="8" y="13.5" font-family="Liberation Sans" font-weight="bold" font-size="9" text-anchor="middle" fill="#0a2a14">99</text></svg>
<div class="abs mono" style="left:918.50px;top:19.6px;width:200px;text-align:center;font-size:20px;letter-spacing:-0.9px;line-height:20px;color:#000">Strings</div>
<svg class="abs" style="left:1153px;top:20px" width="14" height="14" viewBox="0 0 14 14"><rect x="0.75" y="0.75" width="12.5" height="12.5" rx="2" fill="#bcbcbc" stroke="#a4a4a4" stroke-width="1.5"/><path d="M4 4 L10 10 M10 4 L4 10" stroke="#fff" stroke-width="2"/></svg>
<div class="abs" style="left:1196px;top:9px;width:341px;height:33px;background:#f2f2f2;border-top:1px solid #e2e2e2"></div>
<div class="abs" style="left:1196px;top:10px;width:1px;height:32px;background:#e0e0e0"></div>
<svg class="abs" style="left:1217px;top:18px" width="16" height="16" viewBox="0 0 16 16"><rect x="0.75" y="0.75" width="14.5" height="14.5" rx="1.6" fill="#f6f6f6" stroke="#7a7a7a" stroke-width="1.5"/><rect x="1.5" y="1.5" width="13" height="2.6" fill="#0ad8fc"/><rect x="1.5" y="4.1" width="13" height="0.8" fill="#4a8a9a"/><path d="M5.6 5.6 L10.4 5.6 L13 9.6 L10.4 13.6 L5.6 13.6 L3 9.6 Z" fill="none" stroke="#222" stroke-width="1.1" stroke-linejoin="round"/><path d="M4.2 11.2 Q8 15.4 11.8 11.2" fill="none" stroke="#222" stroke-width="1.8"/><ellipse cx="8" cy="11.6" rx="1.2" ry="1.9" fill="#40e090"/></svg>
<div class="abs mono" style="left:1258.60px;top:19.6px;width:200px;text-align:center;font-size:20px;letter-spacing:-0.9px;line-height:20px;color:#000">Hex View-1</div>
<svg class="abs" style="left:1494px;top:20px" width="14" height="14" viewBox="0 0 14 14"><rect x="0.75" y="0.75" width="12.5" height="12.5" rx="2" fill="#bcbcbc" stroke="#a4a4a4" stroke-width="1.5"/><path d="M4 4 L10 10 M10 4 L4 10" stroke="#fff" stroke-width="2"/></svg>
<div class="abs" style="left:1537px;top:9px;width:340px;height:33px;background:#f2f2f2;border-top:1px solid #e2e2e2"></div>
<div class="abs" style="left:1537px;top:10px;width:1px;height:32px;background:#e0e0e0"></div>
<svg class="abs" style="left:1558px;top:18px" width="16" height="16" viewBox="0 0 16 16"><rect x="0.75" y="0.75" width="14.5" height="14.5" rx="1.6" fill="#fafafa" stroke="#7a7a7a" stroke-width="1.5"/><rect x="1.5" y="1.5" width="13" height="2.6" fill="#0ad8fc"/><rect x="1.5" y="4.1" width="13" height="0.8" fill="#4a8a9a"/><circle cx="8" cy="9.6" r="4.8" fill="#1c1c1c"/><path d="M8.6 6.6 Q7.2 6.6 7.5 8.4 Q7.6 9.5 6.8 9.7 Q7.6 9.9 7.5 11 Q7.3 12.7 8.8 12.6" fill="none" stroke="#fff" stroke-width="1.1"/></svg>
<div class="abs mono" style="left:1600.20px;top:19.6px;width:200px;text-align:center;font-size:20px;letter-spacing:-0.9px;line-height:20px;color:#000">Local Types</div>
<svg class="abs" style="left:1835px;top:20px" width="14" height="14" viewBox="0 0 14 14"><rect x="0.75" y="0.75" width="12.5" height="12.5" rx="2" fill="#bcbcbc" stroke="#a4a4a4" stroke-width="1.5"/><path d="M4 4 L10 10 M10 4 L4 10" stroke="#fff" stroke-width="2"/></svg>
<div class="abs" style="left:1877px;top:9px;width:339px;height:33px;background:#f2f2f2;border-top:1px solid #e2e2e2"></div>
<div class="abs" style="left:1877px;top:10px;width:1px;height:32px;background:#e0e0e0"></div>
<svg class="abs" style="left:1899px;top:18px" width="16" height="16" viewBox="0 0 16 16"><rect x="0.75" y="0.75" width="14.5" height="14.5" rx="1.6" fill="#fbfbfb" stroke="#7a7a7a" stroke-width="1.5"/><rect x="1.5" y="1.5" width="13" height="2.6" fill="#0ad8fc"/><rect x="1.5" y="4.1" width="13" height="0.8" fill="#4a8a9a"/><rect x="6.3" y="4.6" width="1.2" height="10.6" fill="#808080"/><path d="M1.6 5.5 L7.2 9.2 L1.6 12.8 Z" fill="#5de8a0" stroke="#4a4a4a" stroke-width="0.6"/><rect x="8.8" y="9.0" width="5.2" height="1" fill="#8a8a8a"/><rect x="8.8" y="11.0" width="5.2" height="1" fill="#8a8a8a"/><rect x="8.8" y="13.0" width="5.2" height="1" fill="#8a8a8a"/><rect x="8.8" y="15.0" width="5.2" height="1" fill="#8a8a8a"/></svg>
<div class="abs mono" style="left:1941.90px;top:19.6px;width:200px;text-align:center;font-size:20px;letter-spacing:-0.9px;line-height:20px;color:#000">Imports</div>
<svg class="abs" style="left:2176px;top:20px" width="14" height="14" viewBox="0 0 14 14"><rect x="0.75" y="0.75" width="12.5" height="12.5" rx="2" fill="#bcbcbc" stroke="#a4a4a4" stroke-width="1.5"/><path d="M4 4 L10 10 M10 4 L4 10" stroke="#fff" stroke-width="2"/></svg>
<div class="abs" style="left:2216px;top:9px;width:343px;height:33px;background:#f2f2f2;border-top:1px solid #e2e2e2"></div>
<div class="abs" style="left:2216px;top:10px;width:1px;height:32px;background:#e0e0e0"></div>
<svg class="abs" style="left:2240px;top:18px" width="16" height="16" viewBox="0 0 16 16"><rect x="0.75" y="0.75" width="14.5" height="14.5" rx="1.6" fill="#fbfbfb" stroke="#7a7a7a" stroke-width="1.5"/><rect x="1.5" y="1.5" width="13" height="2.6" fill="#0ad8fc"/><rect x="1.5" y="4.1" width="13" height="0.8" fill="#4a8a9a"/><rect x="8.5" y="4.6" width="1.2" height="10.6" fill="#808080"/><path d="M9 5.5 L14.6 9.2 L9 12.8 Z" fill="#5de8a0" stroke="#4a4a4a" stroke-width="0.6"/><rect x="2" y="9.0" width="5.4" height="1" fill="#8a8a8a"/><rect x="2" y="11.0" width="5.4" height="1" fill="#8a8a8a"/><rect x="2" y="13.0" width="5.4" height="1" fill="#8a8a8a"/><rect x="2" y="15.0" width="5.4" height="1" fill="#8a8a8a"/></svg>
<div class="abs mono" style="left:2282.20px;top:19.6px;width:200px;text-align:center;font-size:20px;letter-spacing:-0.9px;line-height:20px;color:#000">Exports</div>
<svg class="abs" style="left:2517px;top:20px" width="14" height="14" viewBox="0 0 14 14"><rect x="0.75" y="0.75" width="12.5" height="12.5" rx="2" fill="#bcbcbc" stroke="#a4a4a4" stroke-width="1.5"/><path d="M4 4 L10 10 M10 4 L4 10" stroke="#fff" stroke-width="2"/></svg>
<div class="abs" style="left:514px;top:43px;width:75px;height:956px;background:#fff"></div>
<div class="abs" style="left:589px;top:43px;width:5px;height:927px;background:#efefef"></div>
<div class="abs" style="left:594px;top:43px;width:1935px;height:927px;background:#fff;overflow:hidden" id="cv">
<div class="abs" style="left:0;top:109px;width:1935px;height:26px;background:#e4e4e4"></div><div class="abs" style="left:0;top:109px;width:1px;height:26px;background:#c4c4c4"></div><div class="abs" style="left:0;top:109px;width:16px;height:1px;background:#c4c4c4"></div>
<div class="code" style="left:15.4px;top:3px"><span class="olive">.rodata:000021F9</span>                 <span class="navy">db</span>  <span class="grn">  0</span></div>
<div class="code" style="left:15.4px;top:30px"><span class="olive">.rodata:000021FA</span>                 <span class="navy">db</span>  <span class="grn">25h</span> <span class="gray">; %</span></div>
<div class="code" style="left:15.4px;top:57px"><span class="olive">.rodata:000021FB</span>                 <span class="navy">db</span>  <span class="grn">73h</span> <span class="gray">; s</span></div>
<div class="code" style="left:15.4px;top:84px"><span class="olive">.rodata:000021FC</span>                 <span class="navy">db</span>  <span class="grn">  0</span></div>
<div class="code" style="left:15.4px;top:111px"><span class="blue">.rodata:000021FD</span>                 <span class="navy">db</span>  <span class="grn">4Eh</span> <span class="gray">; N</span></div>
<div class="code" style="left:15.4px;top:138px"><span class="olive">.rodata:000021FE</span>                 <span class="navy">db</span>  <span class="grn">6Fh</span> <span class="gray">; o</span></div>
<div class="code" style="left:15.4px;top:165px"><span class="olive">.rodata:000021FF</span>                 <span class="navy">db</span>  <span class="grn">20h</span></div>
<div class="code" style="left:15.4px;top:192px"><span class="olive">.rodata:00002200</span>                 <span class="navy">db</span>  <span class="grn">57h</span> <span class="gray">; W</span></div>
<div class="code" style="left:15.4px;top:219px"><span class="olive">.rodata:00002201</span>                 <span class="navy">db</span>  <span class="grn">61h</span> <span class="gray">; a</span></div>
<div class="code" style="left:15.4px;top:246px"><span class="olive">.rodata:00002202</span>                 <span class="navy">db</span>  <span class="grn">79h</span> <span class="gray">; y</span></div>
<div class="code" style="left:15.4px;top:273px"><span class="olive">.rodata:00002203</span>                 <span class="navy">db</span>  <span class="grn">21h</span> <span class="gray">; !</span></div>
<div class="code" style="left:15.4px;top:300px"><span class="olive">.rodata:00002204</span>                 <span class="navy">db</span>  <span class="grn">21h</span> <span class="gray">; !</span></div>
<div class="code" style="left:15.4px;top:327px"><span class="olive">.rodata:00002205</span>                 <span class="navy">db</span>  <span class="grn">21h</span> <span class="gray">; !</span></div>
<div class="code" style="left:15.4px;top:354px"><span class="olive">.rodata:00002206</span>                 <span class="navy">db</span>  <span class="grn">  0</span></div>
<div class="code" style="left:15.4px;top:381px"><span class="olive">.rodata:00002207</span>                 <span class="navy">db</span>  <span class="grn">59h</span> <span class="gray">; Y</span></div>
<div class="code" style="left:15.4px;top:408px"><span class="olive">.rodata:00002208</span>                 <span class="navy">db</span>  <span class="grn">6Fh</span> <span class="gray">; o</span></div>
<div class="code" style="left:15.4px;top:435px"><span class="olive">.rodata:00002209</span>                 <span class="navy">db</span>  <span class="grn">75h</span> <span class="gray">; u</span></div>
<div class="code" style="left:15.4px;top:462px"><span class="olive">.rodata:0000220A</span>                 <span class="navy">db</span>  <span class="grn">20h</span></div>
<div class="code" style="left:15.4px;top:489px"><span class="olive">.rodata:0000220B</span>                 <span class="navy">db</span>  <span class="grn">57h</span> <span class="gray">; W</span></div>
<div class="code" style="left:15.4px;top:516px"><span class="olive">.rodata:0000220C</span>                 <span class="navy">db</span>  <span class="grn">69h</span> <span class="gray">; i</span></div>
<div class="code" style="left:15.4px;top:543px"><span class="olive">.rodata:0000220D</span>                 <span class="navy">db</span>  <span class="grn">6Eh</span> <span class="gray">; n</span></div>
<div class="code" style="left:15.4px;top:570px"><span class="olive">.rodata:0000220E</span>                 <span class="navy">db</span>  <span class="grn">20h</span></div>
<div class="code" style="left:15.4px;top:597px"><span class="olive">.rodata:0000220F</span>                 <span class="navy">db</span>  <span class="grn">54h</span> <span class="gray">; T</span></div>
<div class="code" style="left:15.4px;top:624px"><span class="olive">.rodata:00002210</span>                 <span class="navy">db</span>  <span class="grn">68h</span> <span class="gray">; h</span></div>
<div class="code" style="left:15.4px;top:651px"><span class="olive">.rodata:00002211</span>                 <span class="navy">db</span>  <span class="grn">65h</span> <span class="gray">; e</span></div>
<div class="code" style="left:15.4px;top:678px"><span class="olive">.rodata:00002212</span>                 <span class="navy">db</span>  <span class="grn">20h</span></div>
<div class="code" style="left:15.4px;top:705px"><span class="olive">.rodata:00002213</span>                 <span class="navy">db</span>  <span class="grn">47h</span> <span class="gray">; G</span></div>
<div class="code" style="left:15.4px;top:732px"><span class="olive">.rodata:00002214</span>                 <span class="navy">db</span>  <span class="grn">61h</span> <span class="gray">; a</span></div>
<div class="code" style="left:15.4px;top:759px"><span class="olive">.rodata:00002215</span>                 <span class="navy">db</span>  <span class="grn">6Dh</span> <span class="gray">; m</span></div>
<div class="code" style="left:15.4px;top:786px"><span class="olive">.rodata:00002216</span>                 <span class="navy">db</span>  <span class="grn">65h</span> <span class="gray">; e</span></div>
<div class="code" style="left:15.4px;top:813px"><span class="olive">.rodata:00002217</span>                 <span class="navy">db</span>  <span class="grn">21h</span> <span class="gray">; !</span></div>
<div class="code" style="left:15.4px;top:840px"><span class="olive">.rodata:00002218</span>                 <span class="navy">db</span>  <span class="grn">21h</span> <span class="gray">; !</span></div>
<div class="code" style="left:15.4px;top:867px"><span class="olive">.rodata:00002219</span>                 <span class="navy">db</span>  <span class="grn">21h</span> <span class="gray">; !</span></div>
<div class="code" style="left:15.4px;top:894px"><span class="olive">.rodata:0000221A</span>                 <span class="navy">db</span>  <span class="grn">  0</span></div>
<div class="code" style="left:15.4px;top:921px"><span class="olive">.rodata:0000221B</span>                 <span class="navy">db</span>  <span class="grn">59h</span> <span class="gray">; Y</span></div>
</div>
<div class="dot" style="top:50px"></div>
<div class="dot" style="top:77px"></div>
<div class="dot" style="top:104px"></div>
<div class="dot" style="top:131px"></div>
<div class="dot" style="top:158px"></div>
<div class="dot" style="top:185px"></div>
<div class="dot" style="top:212px"></div>
<div class="dot" style="top:239px"></div>
<div class="dot" style="top:266px"></div>
<div class="dot" style="top:293px"></div>
<div class="dot" style="top:320px"></div>
<div class="dot" style="top:347px"></div>
<div class="dot" style="top:374px"></div>
<div class="dot" style="top:401px"></div>
<div class="dot" style="top:428px"></div>
<div class="dot" style="top:455px"></div>
<div class="dot" style="top:482px"></div>
<div class="dot" style="top:509px"></div>
<div class="dot" style="top:536px"></div>
<div class="dot" style="top:563px"></div>
<div class="dot" style="top:590px"></div>
<div class="dot" style="top:617px"></div>
<div class="dot" style="top:644px"></div>
<div class="dot" style="top:671px"></div>
<div class="dot" style="top:698px"></div>
<div class="dot" style="top:725px"></div>
<div class="dot" style="top:752px"></div>
<div class="dot" style="top:779px"></div>
<div class="dot" style="top:806px"></div>
<div class="dot" style="top:833px"></div>
<div class="dot" style="top:860px"></div>
<div class="dot" style="top:887px"></div>
<div class="dot" style="top:914px"></div>
<div class="dot" style="top:941px"></div>
<div class="dot" style="top:968px"></div>
<div class="abs" style="left:2529px;top:43px;width:1px;height:955px;background:#fff"></div>
<div class="abs" style="left:2530px;top:43px;width:29px;height:955px;background:#efefef"></div>
<div class="abs" style="left:2537px;top:777px;width:15px;height:31px;background:#858585"></div>
<div class="abs" style="left:594px;top:970px;width:1935px;height:28px;background:#efefef"></div>
<div class="abs" style="left:593px;top:998px;width:1966px;height:1px;background:#0b68c4"></div><div class="abs" style="left:593px;top:997px;width:1px;height:1px;background:#0b68c4"></div><div class="abs" style="left:593px;top:999px;width:1966px;height:1px;background:#f7f4ef"></div>
<div class="abs" style="left:701px;top:973px;width:1px;height:24px;background:#d0d0d0"></div>
<div class="abs" style="left:1045px;top:973px;width:1px;height:24px;background:#d0d0d0"></div>
<div class="abs" style="left:1441px;top:973px;width:1px;height:24px;background:#d0d0d0"></div>
<div class="abs mono" style="left:597.5px;top:974.5px;font-size:20px;letter-spacing:0.7px;line-height:20px;color:#000">000021FD</div>
<div class="abs mono" style="left:707px;top:974.5px;font-size:20px;letter-spacing:0.7px;line-height:20px;color:#000">000021FD: .rodata:000021FD</div>
<div class="abs mono" style="left:1053px;top:974.5px;font-size:20px;letter-spacing:0.7px;line-height:20px;color:#000">(Synchronized with Hex View-1)</div>
</body></html>
